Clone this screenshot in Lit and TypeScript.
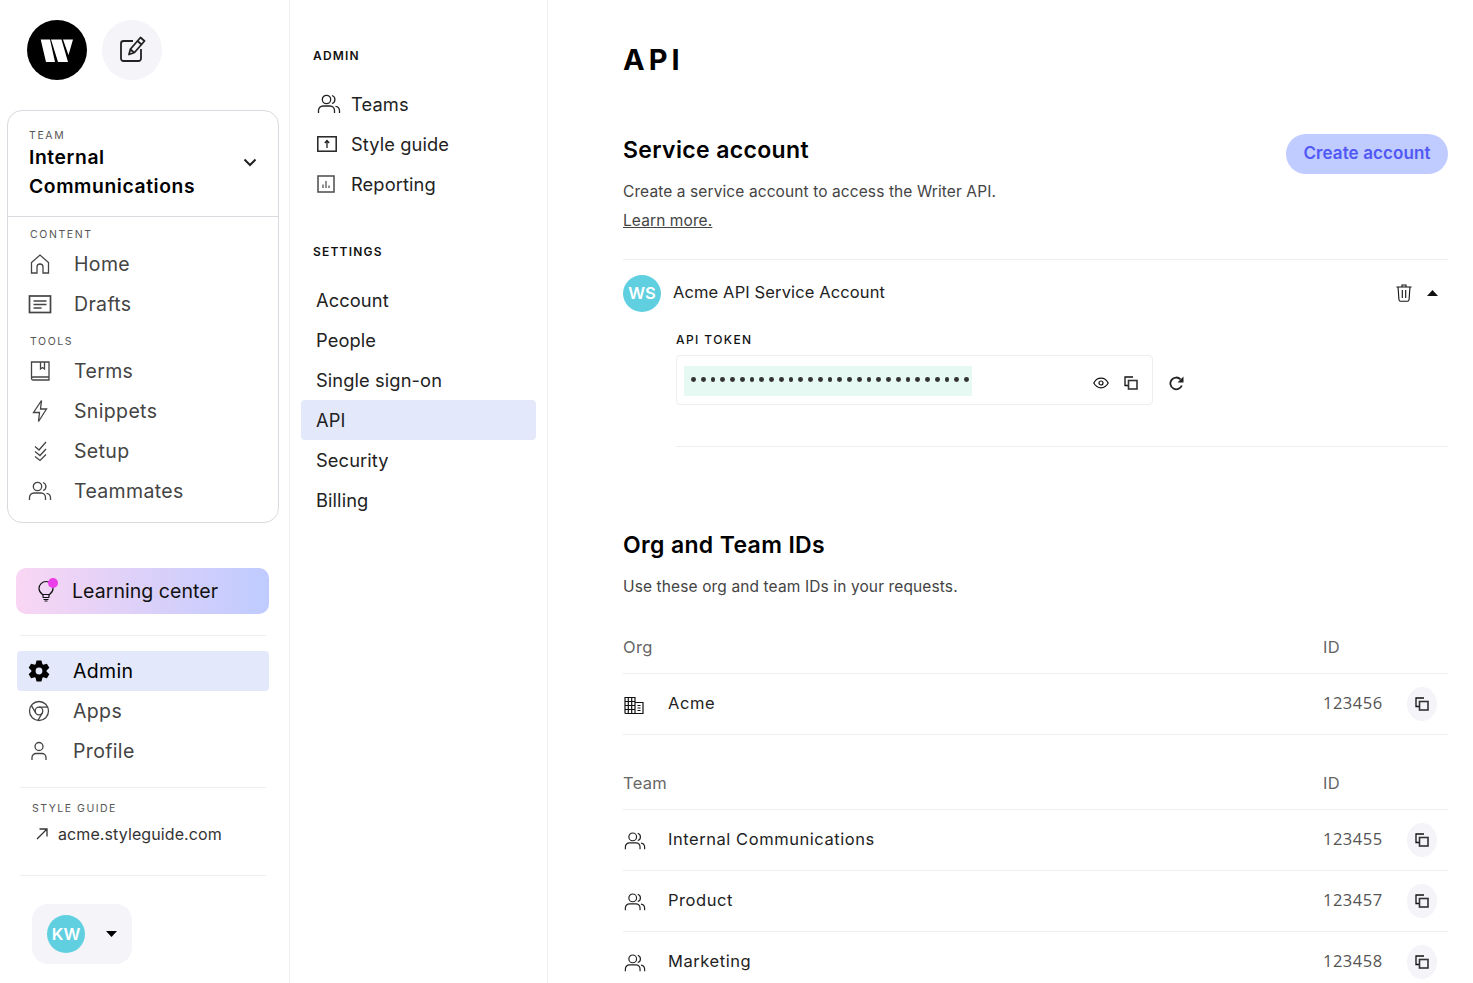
import { LitElement, html, css, svg } from "lit";
import { customElement } from "lit/decorators.js";

const gearPath = (() => {
  const pts: string[] = [];
  const p = (r: number, d: number) => {
    const a = (d * Math.PI) / 180;
    return `${(12 + r * Math.cos(a)).toFixed(2)} ${(12 + r * Math.sin(a)).toFixed(2)}`;
  };
  for (let i = 0; i < 6; i++) {
    const a = i * 60 - 90;
    pts.push(p(7.6, a - 27), p(10.8, a - 13), p(10.8, a + 13), p(7.6, a + 27));
  }
  return `M${pts.join("L")}Z M12 8.6a3.4 3.4 0 1 0 0 6.8a3.4 3.4 0 1 0 0-6.8Z`;
})();

const ic = (body: unknown, size = 24, cls = "") =>
  html`<svg class="ic ${cls}" width=${size} height=${size} viewBox="0 0 24 24" fill="none" stroke="currentColor" stroke-width="1.3">${body}</svg>`;

const people = (size = 24) =>
  ic(svg`<circle cx="9.5" cy="7.5" r="4.200"/><path d="M15 3.500a4.200 4.200 0 0 1 0 8"/><path d="M1.500 21v-2.500a4.500 4.500 0 0 1 4.500-4.500h7a4.500 4.500 0 0 1 4.500 4.500V21"/><path d="M18.500 14.300a4.500 4.500 0 0 1 4 4.200V21"/>`, size);
const home = ic(svg`<path d="M3.500 21V10.500L12 3l8.500 7.500V21h-5.500v-6a3 3 0 0 0-6 0v6Z"/>`);
const drafts = ic(svg`<rect x="1.500" y="4" width="21" height="16.500" stroke-width="1.700"/><path d="M5.500 9h13M5.500 12.500h13M5.500 16h8" stroke-width="1.600"/>`);
const terms = ic(svg`<path d="M3.500 19.500V3H21v18H5A1.500 1.500 0 0 1 3.500 19.500Zm0 0A1.500 1.500 0 0 1 5 18H21"/><path d="M12.500 3v7l2-1.500 2 1.500V3"/>`);
const bolt = ic(svg`<path d="M13.500 1.500 5.500 13.500h6l-1 9 8-12.500h-6Z"/>`);
const setup = ic(svg`<path d="m7 7.500 4 3.500 7-8M7 12.500l5 4 6-6.500M7 17.500l5 4 6-6"/>`);
const chrome = ic(svg`<circle cx="12" cy="12" r="9.500"/><circle cx="12" cy="12" r="3.800"/><path d="M12 8.200h8.800M8.700 13.900 4.300 6.300M15.300 13.900l-4.400 7.600"/>`);
const user = ic(svg`<circle cx="12" cy="7.500" r="4"/><path d="M5 21v-2.500a4 4 0 0 1 4-4h6a4 4 0 0 1 4 4V21"/>`);
const pencil = html`<svg class="ic" width="30" height="30" viewBox="0 0 30 30" fill="none" stroke="currentColor" stroke-width="1.800" stroke-linejoin="round"><path d="M16 6H6.500A2.500 2.500 0 0 0 4 8.500v15A2.500 2.500 0 0 0 6.500 26h15a2.500 2.500 0 0 0 2.500-2.500V14"/><path d="m23.500 2.500 4 3.500-10 11.500-5.500 2 1.500-5.500Z"/><path d="m20.500 6 4 3.500M13.500 14.500l3.500 3"/></svg>`;
const bulb = html`<svg class="ic" width="16" height="22" viewBox="0 0 16 22" fill="none" stroke="currentColor" stroke-width="1.200"><path d="M4.500 14.500C2.500 13 1 11.500 1 8.500a7 7 0 0 1 14 0c0 3-1.500 4.500-3.500 6Z"/><path d="M4.800 14.500h6.400l-.4 3H5.200ZM5.500 19.500h5M6.500 21h3"/></svg>`;
const upbox = html`<svg class="ic" width="20" height="16" viewBox="0 0 20 16" fill="none" stroke="currentColor"><rect x=".8" y=".8" width="18.400" height="14.400" stroke-width="1.500"/><path d="M10 12V5M7.800 7 10 4.500 12.200 7" stroke-width="1.300"/></svg>`;
const reporting = html`<svg class="ic" width="18" height="18" viewBox="0 0 18 18" fill="none" stroke="#555"><rect x="1" y="1" width="16" height="16" stroke-width="1.600"/><path d="M6 13V9.500M9 13V6M12 13v-2.500" stroke-width="1.300"/></svg>`;
const arrow = html`<svg class="ic" width="14" height="14" viewBox="0 0 14 14" fill="none" stroke="currentColor" stroke-width="1.300"><path d="M2 12 12 2M4.500 2H12v7.500"/></svg>`;
const chevron = html`<svg class="ic chev" width="14" height="9" viewBox="0 0 14 9" fill="none" stroke="currentColor" stroke-width="2"><path d="m1.500 1.500 5.500 5.500 5.500-5.500"/></svg>`;
const caretDown = html`<svg class="ic" width="11" height="6" viewBox="0 0 11 6" fill="currentColor"><path d="M0 0h11L5.500 6Z"/></svg>`;
const caretUp = html`<svg class="ic" width="11" height="6" viewBox="0 0 11 6" fill="currentColor"><path d="M0 6h11L5.500 0Z"/></svg>`;
const trash = html`<svg class="ic" width="16" height="18" viewBox="0 0 16 18" fill="none" stroke="currentColor" stroke-width="1.100"><path d="M.5 3h15M6 3V1h4v2M2 3l1 13a1.500 1.500 0 0 0 1.500 1.300h7A1.500 1.500 0 0 0 13 16l1-13M6.300 6v8M9.700 6v8"/></svg>`;
const eye = html`<svg class="ic" width="16" height="12" viewBox="0 0 16 12" fill="none" stroke="currentColor" stroke-width="1.200"><path d="M.8 6C2.500 2.800 5 1.200 8 1.200S13.500 2.800 15.200 6C13.500 9.200 11 10.800 8 10.800S2.500 9.200.8 6Z"/><circle cx="8" cy="6" r="2"/></svg>`;
const copy = html`<svg class="ic" width="14" height="14" viewBox="0 0 14 14" fill="none" stroke="currentColor"><path d="M9 1H1v8.500h3" stroke-width="1.300"/><rect x="4.500" y="4.500" width="8.500" height="8.500" stroke="#333" stroke-width="1.600"/></svg>`;
const refresh = html`<svg class="ic" width="15" height="15" viewBox="0 0 15 15" fill="none" stroke="currentColor" stroke-width="1.800"><path d="M12.800 9.500A5.900 5.900 0 1 1 11.500 3.300"/><path d="M14.500.5v6H8.500Z" fill="currentColor" stroke="none"/></svg>`;
const building = html`<svg class="ic" width="20" height="17" viewBox="0 0 20 17" fill="none" stroke="#111" stroke-width="1.200"><path d="M1 16.500V.5h10v16M11 5.500h8v11H1"/><path d="M1 4.500h10M1 8.500h10M1 12.500h10M4.300.5v16M7.700.5v16M13.500 8.500h3M13.500 11h3M13.500 13.500h3"/></svg>`;

@customElement("app-root")
export class AppRoot extends LitElement {
  static styles = css`
    :host { display: grid; grid-template-columns: 290px 258px 1fr; height: 983px; overflow: hidden; background: #fff;
      font-family: Inter, "Liberation Sans", sans-serif; color: #222; }
    .ic { display: block; flex: none; }
    .side { border-right: 1px solid #eeeef1; box-sizing: border-box; }
    .top { display: flex; gap: 15px; padding: 20px 0 0 27px; }
    .logo, .newbtn { width: 60px; height: 60px; border-radius: 50%; display: flex; align-items: center; justify-content: center; }
    .logo { background: #000; }
    .newbtn { background: #f4f4f9; color: #222; }
    .card { margin: 30px 10px 0 7px; border: 1px solid #d9d9df; border-radius: 15px; padding-bottom: 11px; }
    .teamhead { display: flex; justify-content: space-between; align-items: center; padding: 16px 21px 15px 21px; border-bottom: 1px solid #d9d9df; }
    .chev { margin-top: -4px; }
    .lab { font-size: 10.500px; line-height: 18px; height: 16px; letter-spacing: 1.600px; color: #555; font-weight: 400; }
    .teamname { font-size: 19.300px; line-height: 29px; font-weight: 600; color: #000; letter-spacing: .6px; }
    .cardbody { padding: 9px 0 0 22px; }
    .nav { display: flex; align-items: center; height: 40px; font-size: 19.500px; color: #444; letter-spacing: .35px; }
    .nav .slot { width: 44px; flex: none; display: flex; }
    .cardbody .nav .ic { margin-left: -2px; }
    .mt2 { margin-top: 2px; }
    .mt9 { margin-top: 9px; }
    .learn { margin: 45px 20px 0 16px; height: 46px; border-radius: 10px; box-sizing: border-box; padding-left: 22px; display: flex; align-items: center; gap: 18px;
      background: linear-gradient(90deg, #f9d6f3, #bfcbff); font-size: 19.500px; color: #111; letter-spacing: .05px; position: relative; }
    .dot { position: absolute; left: 32px; top: 10px; width: 10px; height: 10px; border-radius: 50%; background: #ea3ee8; }
    .sep { height: 1px; background: #eeeef1; margin-left: 20px; width: 246px; }
    .learn + .sep { margin-top: 21px; }
    .group { margin: 15px 20px 16px 17px; }
    .group .nav { padding-left: 10px; }
    .group .slot { width: 46px; }
    .group .on { background: #e3e8fb; border-radius: 4px; color: #000; }
    .sg { margin: 12px 0 0 32px; }
    .sg .lab { letter-spacing: 1.500px; }
    .link { display: flex; align-items: center; gap: 9px; margin: 5px 0 28px 3px; height: 26px; font-size: 16px; color: #333; letter-spacing: .1px; }
    .pill { margin: 28px 0 0 32px; width: 100px; height: 60px; background: #f4f4f9; border-radius: 16px; display: flex; align-items: center; padding-left: 15px; box-sizing: border-box; gap: 21px; color: #000; }
    .av { width: 38px; height: 38px; border-radius: 50%; background: #60d0e0; color: #fff; font-weight: 600; font-size: 16.500px; display: flex; align-items: center; justify-content: center; flex: none; }
    .col2 { border-right: 1px solid #eeeef1; padding: 48px 11px 0 11px; box-sizing: border-box; }
    .h { font-size: 12px; line-height: 16px; font-weight: 600; letter-spacing: 1.200px; color: #111; margin-left: 12px; }
    .list { margin: 20px 0 40px; }
    .row { height: 40px; display: flex; align-items: center; padding-left: 15px; font-size: 18.300px; color: #222; letter-spacing: .1px; border-radius: 4px; }
    .row .slot { width: 35px; flex: none; display: flex; padding-left: 1px; box-sizing: border-box; color: #222; }
    .row.on { background: #e3e8fb; }
    .main { padding: 40px 25px 0 75px; min-width: 0; }
    h1 { margin: 0; font-size: 29px; line-height: 40px; font-weight: 700; letter-spacing: 4px; color: #000; }
    .head { display: flex; justify-content: space-between; margin-top: 54px; }
    h2 { margin: 0; font-size: 23px; line-height: 32px; font-weight: 600; letter-spacing: .35px; color: #000; }
    .cta { width: 162px; height: 40px; box-sizing: border-box; padding-bottom: 2px; border-radius: 20px; background: #c0cbff; color: #5058f5; font-weight: 600; font-size: 17px; letter-spacing: .1px; display: flex; align-items: center; justify-content: center; }
    .desc { font-size: 15.500px; line-height: 29px; color: #444; margin-top: 3px; letter-spacing: .1px; }
    .desc a { display: block; color: #444; text-decoration: underline; }
    .acct { margin-top: 24px; border-top: 1px solid #eeeef1; padding-top: 15px; }
    .acctrow { display: flex; align-items: center; height: 38px; margin-bottom: 18px; }
    .acctrow .av { height: 37px; box-sizing: border-box; padding-bottom: 1px; margin-top: -1px; }
    .acctname { margin: -4px 0 0 12px; flex: 1; font-size: 16.500px; color: #222; letter-spacing: .12px; }
    .acctrow .ctl { display: flex; align-items: center; gap: 15px; margin: -3px 10px 0 0; color: #111; }
    .tok { margin-left: 53px; }
    .toklab { font-size: 12px; line-height: 16px; font-weight: 500; letter-spacing: 1.400px; color: #111; position: relative; top: 1px; }
    .tokrow { display: flex; align-items: center; gap: 16px; margin-top: 8px; }
    .tokrow > .ic { margin-top: 6px; }
    .tokbox { width: 477px; height: 50px; box-sizing: border-box; border: 1px solid #eeeef1; border-radius: 4px; display: flex; align-items: center; padding: 0 14px 0 7px; color: #111; }
    .tokbox > .ic { margin-top: 6px; }
    .secret { width: 288px; height: 30px; background: #e6faf3; display: flex; align-items: center; padding-left: 7px; box-sizing: border-box; gap: 4.870px; margin-top: 1px; margin-right: auto; }
    .secret i { width: 4.900px; height: 4.900px; border-radius: 50%; background: #333; flex: none; margin-top: -2px; }
    .tokbox .ic + .ic { margin-left: 15px; }
    .rule { border-top: 1px solid #eeeef1; margin: 41px 0 0 53px; }
    .sec2 { margin-top: 82px; }
    .sec2 .desc { margin-top: 12px; line-height: 28px; letter-spacing: .12px; }
    .tab { display: grid; grid-template-columns: 700px 84px 41px; }
    .thead { height: 41px; box-sizing: border-box; padding-bottom: 12px; margin-top: 32px; border-bottom: 1px solid #eeeef1; font-size: 16.500px; color: #666; align-items: center; letter-spacing: .3px; }
    .thead.t2 { margin-top: 34px; }
    .trow { height: 60px; border-bottom: 1px solid #eeeef1; align-items: center; }
    .trow:last-child { border-bottom: none; }
    .nm { display: flex; align-items: center; font-size: 16.500px; color: #222; letter-spacing: .55px; margin-top: -2px; }
    .nm .slot { width: 45px; flex: none; padding-left: 1px; box-sizing: border-box; margin-top: 4px; }
    .num { font-family: "Open Sans", sans-serif; font-size: 16.500px; color: #555; letter-spacing: .5px; margin-top: -3px; }
    .cp { width: 30px; height: 34px; border-radius: 50%; background: #f4f4f9; display: flex; align-items: center; justify-content: center; color: #111; }
  `;

  private tRow(icon: unknown, name: string, id: string) {
    return html`<div class="tab trow">
      <div class="nm"><span class="slot">${icon}</span>${name}</div>
      <div class="num">${id}</div>
      <div class="cp">${copy}</div>
    </div>`;
  }

  render() {
    const nav = (i: unknown, t: string, on = false) =>
      html`<div class="nav ${on ? "on" : ""}"><span class="slot">${i}</span>${t}</div>`;
    const row = (t: string, on = false) => html`<div class="row ${on ? "on" : ""}">${t}</div>`;
    const irow = (i: unknown, t: string) => html`<div class="row"><span class="slot">${i}</span>${t}</div>`;
    return html`
      <aside class="side">
        <div class="top">
          <div class="logo">
            <svg width="60" height="60" viewBox="0 0 60 60" fill="#fff"><path d="M13.700 19.500H23L28 42H19ZM24 19.500h10.500L41 42H31ZM36 19.500h10L41.500 35Z"/></svg>
          </div>
          <div class="newbtn">${pencil}</div>
        </div>
        <div class="card">
          <div class="teamhead">
            <div>
              <div class="lab">TEAM</div>
              <div class="teamname">Internal<br />Communications</div>
            </div>
            ${chevron}
          </div>
          <div class="cardbody">
            <div class="lab">CONTENT</div>
            <div class="mt2">${nav(home, "Home")}${nav(drafts, "Drafts")}</div>
            <div class="lab mt9">TOOLS</div>
            <div class="mt2">${nav(terms, "Terms")}${nav(bolt, "Snippets")}${nav(setup, "Setup")}${nav(people(), "Teammates")}</div>
          </div>
        </div>
        <div class="learn">${bulb}<span class="dot"></span>Learning center</div>
        <div class="sep"></div>
        <div class="group">
          <div class="nav on"><span class="slot"><svg class="ic" width="24" height="24" viewBox="0 0 24 24" fill="#000" fill-rule="evenodd"><path d=${gearPath} /></svg></span>Admin</div>
          ${nav(chrome, "Apps")}${nav(user, "Profile")}
        </div>
        <div class="sep"></div>
        <div class="sg">
          <div class="lab">STYLE GUIDE</div>
          <div class="link">${arrow}acme.styleguide.com</div>
        </div>
        <div class="sep"></div>
        <div class="pill"><div class="av">KW</div>${caretDown}</div>
      </aside>

      <nav class="col2">
        <div class="h">ADMIN</div>
        <div class="list">
          ${irow(people(), "Teams")}${irow(upbox, "Style guide")}${irow(reporting, "Reporting")}
        </div>
        <div class="h">SETTINGS</div>
        <div class="list">
          ${row("Account")}${row("People")}${row("Single sign-on")}${row("API", true)}${row("Security")}${row("Billing")}
        </div>
      </nav>

      <main class="main">
        <h1>API</h1>
        <div class="head">
          <h2>Service account</h2>
          <div class="cta">Create account</div>
        </div>
        <div class="desc">Create a service account to access the Writer API.<a>Learn more.</a></div>
        <div class="acct">
          <div class="acctrow">
            <div class="av">WS</div>
            <div class="acctname">Acme API Service Account</div>
            <div class="ctl">${trash}${caretUp}</div>
          </div>
          <div class="tok">
            <div class="toklab">API TOKEN</div>
            <div class="tokrow">
              <div class="tokbox">
                <div class="secret">${Array.from({ length: 29 }, () => html`<i></i>`)}</div>
                ${eye}${copy}
              </div>
              ${refresh}
            </div>
          </div>
          <div class="rule"></div>
        </div>
        <div class="sec2">
          <h2>Org and Team IDs</h2>
          <div class="desc">Use these org and team IDs in your requests.</div>
          <div class="tab thead"><div>Org</div><div>ID</div></div>
          ${this.tRow(building, "Acme", "123456")}
          <div class="tab thead t2"><div>Team</div><div>ID</div></div>
          ${this.tRow(people(22), "Internal Communications", "123455")}
          ${this.tRow(people(22), "Product", "123457")}
          ${this.tRow(people(22), "Marketing", "123458")}
        </div>
      </main>
    `;
  }
}
